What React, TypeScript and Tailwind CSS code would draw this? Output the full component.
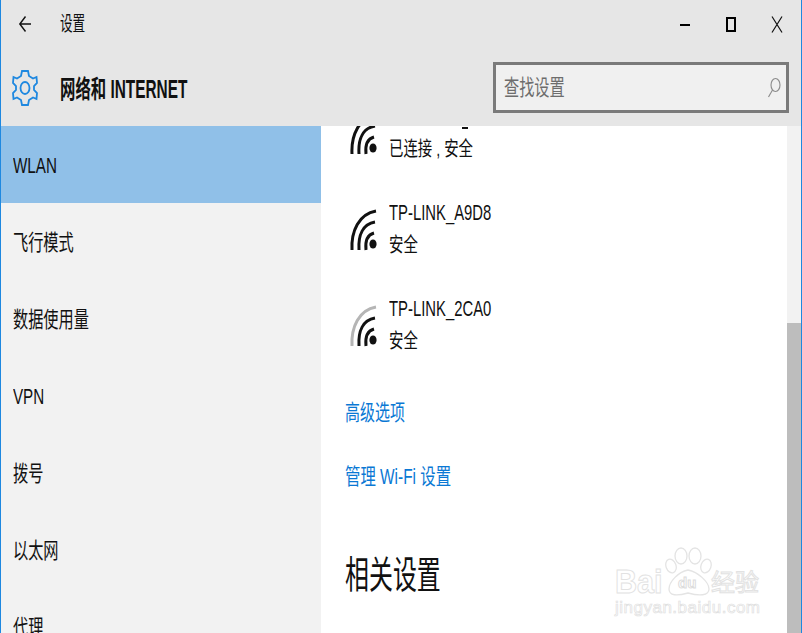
const menu = ["WLAN", "飞行模式", "数据使用量", "VPN", "拨号", "以太网", "代理"];

function Wifi({ weak = false }: { weak?: boolean }) {
  return (
    <svg width="30" height="44" viewBox="0 0 30 44" fill="none" strokeLinecap="butt" className="shrink-0">
      <path d="M3 43C2 24 10 7 27 4" stroke={weak ? "#b5b5b5" : "#111"} strokeWidth="3" />
      <path d="M10 43C9 28 14 17 26 15" stroke="#111" strokeWidth="3" />
      <path d="M17 43C16 34 18 28 25 26" stroke="#111" strokeWidth="3" />
      <ellipse cx="24" cy="37" rx="3.6" ry="4.6" fill="#111" />
    </svg>
  );
}

function Squeezed({ children, className = "" }: { children: React.ReactNode; className?: string }) {
  return <span className={`inline-block origin-left whitespace-nowrap ${className}`}>{children}</span>;
}

function Network({ name, status, weak, className = "" }: { name: string; status: string; weak?: boolean; className?: string }) {
  return (
    <div className={`flex items-center gap-[10px] pl-[28px] h-[64px] ${className}`}>
      <Wifi weak={weak} />
      <div className="flex flex-col text-[#111]">
        <Squeezed className="mb-[2px] text-[22px] leading-[30px] scale-x-[0.675]">{name}</Squeezed>
        <Squeezed className="text-[20px] leading-[30px] scale-x-[0.72]">{status}</Squeezed>
      </div>
    </div>
  );
}

function Watermark() {
  return (
    <div className="absolute left-[614px] top-[546px] w-[160px] h-[76px] pointer-events-none">
      <svg width="50" height="60" viewBox="0 0 50 60" fill="none" stroke="#e4e4e4" strokeWidth="1.3" className="absolute left-[50px] top-0">
        <ellipse cx="16" cy="10" rx="6" ry="8" />
        <ellipse cx="30" cy="10" rx="6" ry="8" />
        <ellipse cx="6" cy="20" rx="5" ry="7" transform="rotate(-20 6 20)" />
        <ellipse cx="41" cy="20" rx="5" ry="7" transform="rotate(20 41 20)" />
        <path d="M23 24C13 26 4 36 4 43C4 50 12 50 23 47C34 50 44 50 44 43C44 36 33 26 23 24Z" />
      </svg>
      <span className="absolute left-0 top-[15px] origin-left scale-x-[0.9] text-[34px] leading-[40px] font-bold text-white [-webkit-text-stroke:1px_#e2e2e2] [font-family:'Liberation_Sans',sans-serif]">Bai</span>
      <span className="absolute left-[63px] top-[27px] text-[15px] leading-[20px] font-bold text-white [-webkit-text-stroke:1px_#dcdcdc] [font-family:'Liberation_Sans',sans-serif]">du</span>
      <span className="absolute left-[96px] top-[23px] text-[24px] leading-[28px] text-white [-webkit-text-stroke:1px_#e2e2e2]">经验</span>
      <span className="absolute left-0 top-[52px] text-[17px] leading-[20px] tracking-[0.5px] text-white [-webkit-text-stroke:0.7px_#e0e0e0] [font-family:'Liberation_Sans',sans-serif]">jingyan.baidu.com</span>
    </div>
  );
}

export default function App() {
  return (
    <div className="relative flex h-[633px] w-[802px] flex-col overflow-hidden border-x border-x-[#1e88e0] bg-white text-[#111] [font-family:'Liberation_Sans','Noto_Sans_CJK_SC',sans-serif]">
      <header className="flex h-[126px] shrink-0 flex-col bg-[#e6e6e6]">
        <div className="flex h-[47px] items-center">
          <svg width="14" height="18" viewBox="0 0 14 18" fill="none" stroke="#111" strokeWidth="1.4" className="ml-[17px]">
            <path d="M13 9H2M7.5 1.5L1.8 9L7.5 16.5" />
          </svg>
          <Squeezed className="ml-[28px] text-[20px] leading-none scale-x-[0.63]">设置</Squeezed>
          <div className="ml-auto flex items-center pr-[18px] pt-[2px]">
            <div className="h-[2px] w-[10px] bg-black" />
            <div className="ml-[36px] h-[15px] w-[10px] border-2 border-black" />
            <svg width="12" height="17" viewBox="0 0 12 17" stroke="#111" strokeWidth="1.2" className="ml-[35px]">
              <path d="M1 .5L11 16.5M11 .5L1 16.5" />
            </svg>
          </div>
        </div>
        <div className="flex flex-1 items-start">
          <svg width="26" height="38" viewBox="0 0 26 38" fill="none" stroke="#1e88e0" strokeWidth="1.8" className="ml-[11px] mt-[22px]">
            <ellipse cx="13" cy="19" rx="4.5" ry="6" />
            <path d="M10 2H16L17 7L21 9.5L24.5 8L25 14L22 17V21L25 24L24.5 30L21 28.5L17 31L16 36H10L9 31L5 28.5L1.5 30L1 24L4 21V17L1 14L1.5 8L5 9.5L9 7Z" />
          </svg>
          <Squeezed className="ml-[22px] mt-[27px] text-[25px] font-bold leading-[30px] scale-x-[0.615]">网络和 INTERNET</Squeezed>
          <div className="ml-auto mr-[12px] mt-[15px] flex h-[51px] w-[296px] items-center justify-between border-[3px] border-[#7a7a7a] bg-[#f0f0f0] pl-[8px] pr-[5px]">
            <Squeezed className="text-[22px] leading-none text-[#6d6d6d] scale-x-[0.69]">查找设置</Squeezed>
            <svg width="14" height="22" viewBox="0 0 14 22" fill="none" stroke="#8a8a8a" strokeWidth="1.1">
              <ellipse cx="8.5" cy="8" rx="4.5" ry="6.5" />
              <path d="M5.5 13L1.5 20" />
            </svg>
          </div>
        </div>
      </header>

      <div className="flex min-h-0 flex-1">
        <nav className="w-[320px] shrink-0 bg-[#f2f2f2]">
          {menu.map((m, i) => (
            <div key={m} className={`flex h-[77px] items-center pl-[12px] pt-[2px] ${i === 0 ? "bg-[#90c0e8]" : ""}`}>
              <Squeezed className="text-[22px] leading-none scale-x-[0.69]">{m}</Squeezed>
            </div>
          ))}
        </nav>

        <main className="flex min-w-0 flex-1 overflow-hidden">
          <div className="relative min-w-0 flex-1 overflow-hidden">
            <div className="absolute left-[141px] top-[1px] h-[2px] w-[6px] bg-[#111]" />
            <div className="mt-[-25px] flex flex-col">
              <Network name={"\u00a0"} status="已连接 , 安全" />
              <Network name="TP-LINK_A9D8" status="安全" className="mt-[32px]" />
              <Network name="TP-LINK_2CA0" status="安全" weak className="mt-[32px]" />
              <div className="ml-[24px] mt-[43px] text-[22px] leading-[26px] text-[#0a78d4]">
                <Squeezed className="scale-x-[0.68]">高级选项</Squeezed>
              </div>
              <div className="ml-[24px] mt-[38px] text-[22px] leading-[26px] text-[#0a78d4]">
                <Squeezed className="scale-x-[0.70]">管理 Wi-Fi 设置</Squeezed>
              </div>
              <div className="ml-[24px] mt-[62px] text-[38px] leading-[46px] text-[#111]">
                <Squeezed className="scale-x-[0.63]">相关设置</Squeezed>
              </div>
            </div>
          </div>
          <div className="flex w-[14px] shrink-0 flex-col bg-[#f2f2f2]">
            <div className="mt-[197px] flex-1 bg-[#bdbdbd]" />
          </div>
        </main>
      </div>
      <Watermark />
    </div>
  );
}
